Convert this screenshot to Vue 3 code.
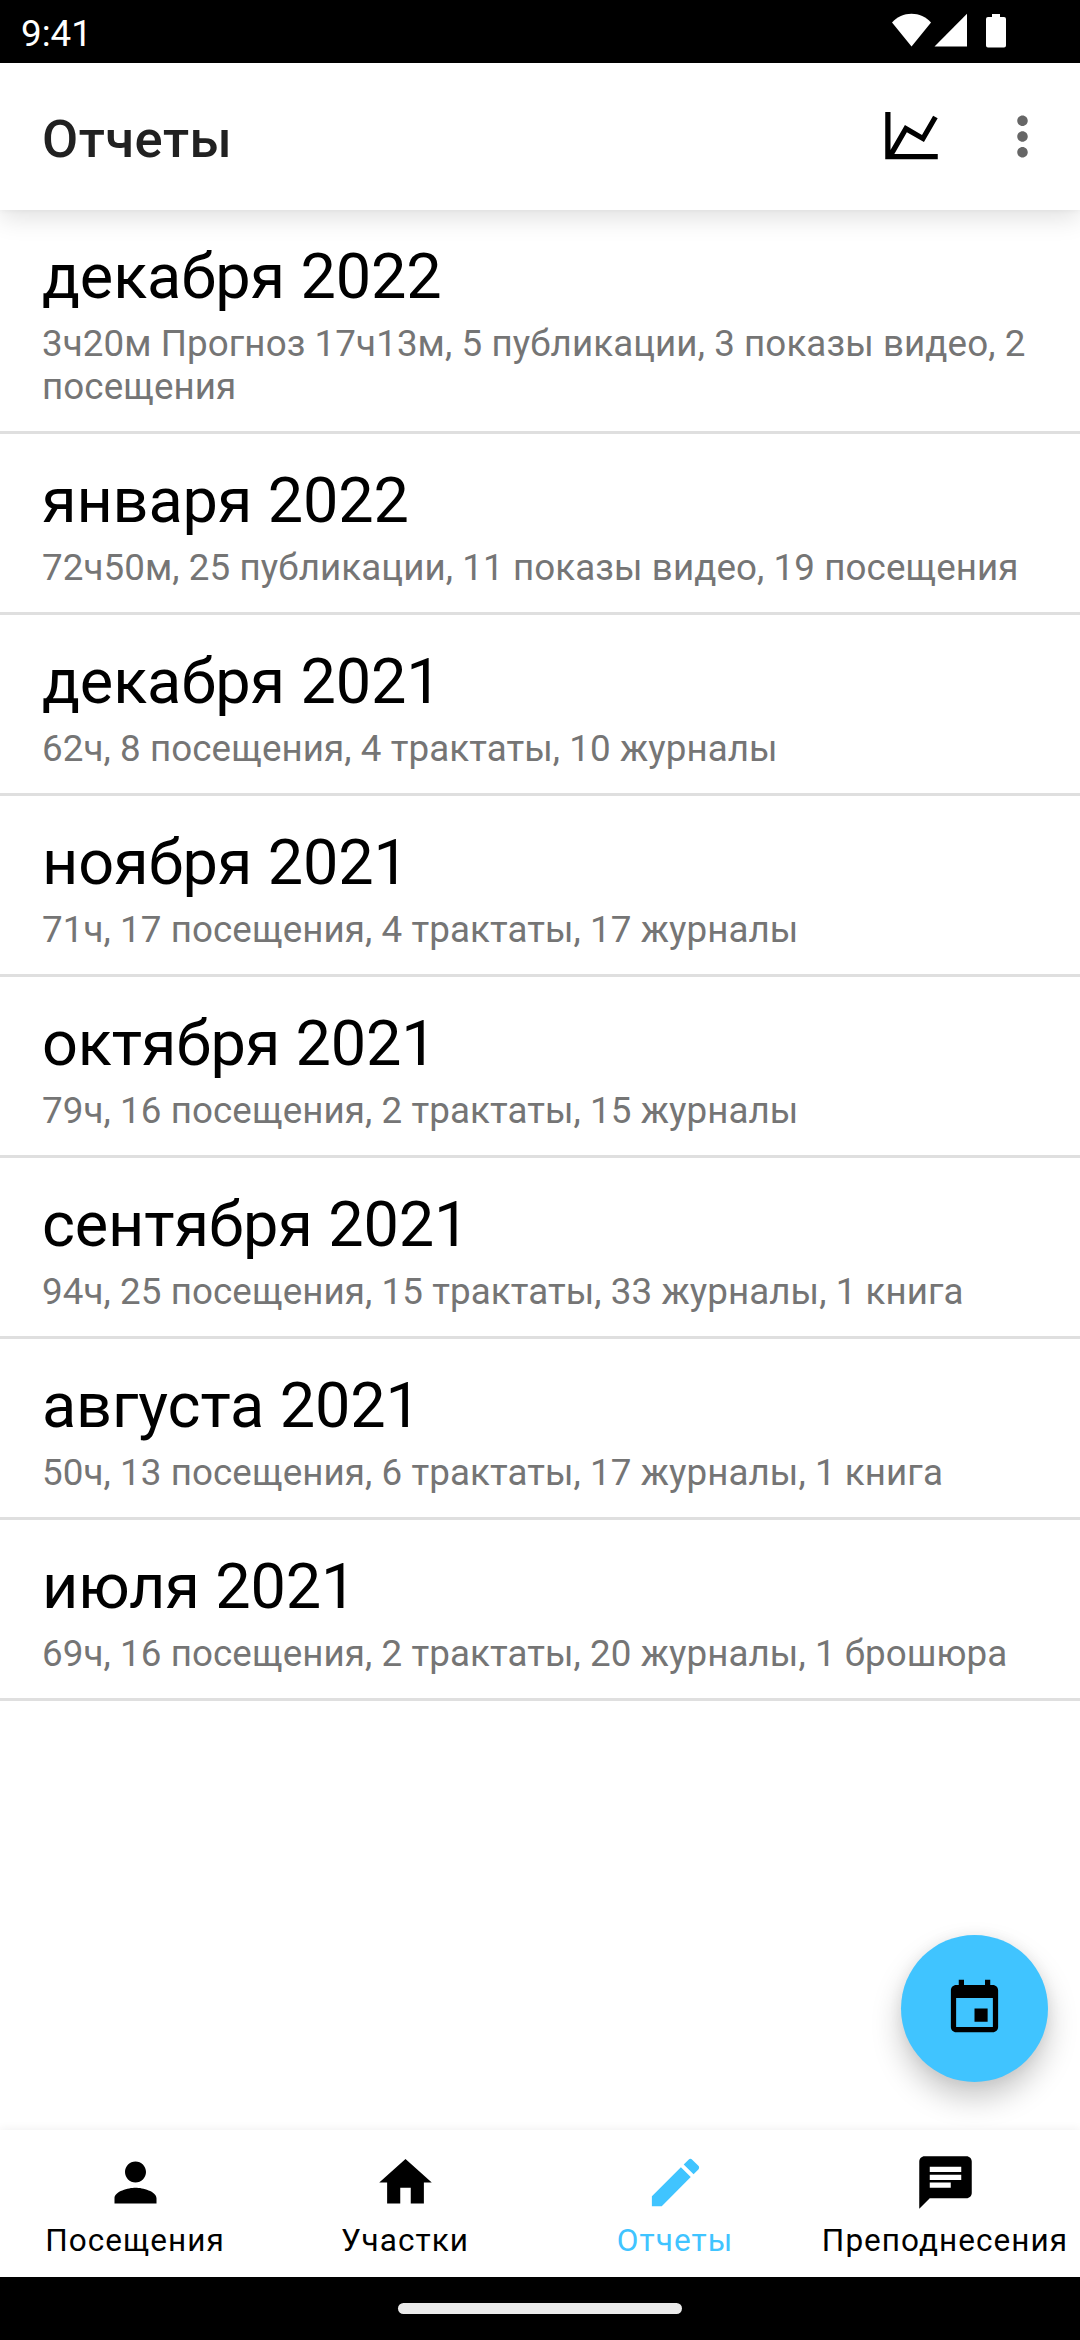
<template>
  <div id="app-reports">
    <div class="status-bar">
      <span class="clock">9:41</span>
      <svg class="status-icons" width="116" height="36" viewBox="0 0 116 36" fill="#ffffff">
        <path d="M0 9.500C5 4 12 0.800 19.500 0.800S34 4 39 9.500L19.500 33.500z" />
        <path d="M42.500 33.500L75 0.800V33.500z" />
        <path d="M96 4h4V1h8v3h4q2 0 2 2v26.500q0 2-2 2H96q-2 0-2-2V6q0-2 2-2z" />
      </svg>
    </div>

    <header class="toolbar">
      <h1>Отчеты</h1>
      <button class="icon-button button-chart">
        <svg viewBox="0 0 24 24"><path :d="icons.chart" /></svg>
      </button>
      <button class="icon-button button-more">
        <svg viewBox="0 0 24 24"><path :d="icons.more" /></svg>
      </button>
    </header>

    <main class="reports">
      <div v-for="report in reports" :key="report.month" class="report">
        <div class="month">{{ report.month }}</div>
        <div class="summary">{{ report.summary }}</div>
      </div>
      <button class="fab">
        <svg viewBox="0 0 24 24"><path :d="icons.event" /></svg>
      </button>
    </main>

    <nav class="bottom-nav">
      <a
        v-for="tab in tabs"
        :key="tab.label"
        class="tab"
        :class="{ active: tab.label === current }"
        @click="current = tab.label"
      >
        <svg viewBox="0 0 24 24"><path :d="tab.icon" /></svg>
        <span>{{ tab.label }}</span>
      </a>
    </nav>

    <div class="system-bar"><div class="handle"></div></div>
  </div>
</template>

<script setup>
import { ref } from 'vue'

const icons = {
  chart: 'M16 11.780L20.240 4.450l1.730 1L16.740 14.500l-6.510-3.750L5.460 19H22v2H2V3h2v14.540L9.500 8z',
  more: 'M12 8c1.100 0 2-.9 2-2s-.9-2-2-2-2 .9-2 2 .9 2 2 2zm0 2c-1.100 0-2 .9-2 2s.9 2 2 2 2-.9 2-2-.9-2-2-2zm0 6c-1.100 0-2 .9-2 2s.9 2 2 2 2-.9 2-2-.9-2-2-2z',
  event: 'M17 12h-5v5h5v-5zM16 1v2H8V1H6v2H5c-1.110 0-1.990.9-1.990 2L3 19c0 1.100.89 2 2 2h14c1.100 0 2-.9 2-2V5c0-1.100-.9-2-2-2h-1V1h-2zm3 18H5V8h14v11z',
  person: 'M12 12c2.210 0 4-1.790 4-4s-1.790-4-4-4-4 1.790-4 4 1.790 4 4 4zm0 2c-2.670 0-8 1.340-8 4v2h16v-2c0-2.660-5.330-4-8-4z',
  home: 'M10 20v-6h4v6h5v-8h3L12 3 2 12h3v8z',
  edit: 'M3 17.250V21h3.750L17.810 9.940l-3.750-3.750L3 17.250zM20.710 7.040c.39-.39.39-1.020 0-1.410l-2.340-2.340c-.39-.39-1.020-.39-1.410 0l-1.830 1.830 3.750 3.750 1.830-1.830z',
  chat: 'M20 2H4c-1.100 0-1.990.9-1.990 2L2 22l4-4h14c1.100 0 2-.9 2-2V4c0-1.100-.9-2-2-2zM6 9h12v2H6V9zm8 5H6v-2h8v2zm4-6H6V6h12v2z'
}

const reports = [
  { month: 'декабря 2022', summary: '3ч20м Прогноз 17ч13м, 5 публикации, 3 показы видео, 2 посещения' },
  { month: 'января 2022', summary: '72ч50м, 25 публикации, 11 показы видео, 19 посещения' },
  { month: 'декабря 2021', summary: '62ч, 8 посещения, 4 трактаты, 10 журналы' },
  { month: 'ноября 2021', summary: '71ч, 17 посещения, 4 трактаты, 17 журналы' },
  { month: 'октября 2021', summary: '79ч, 16 посещения, 2 трактаты, 15 журналы' },
  { month: 'сентября 2021', summary: '94ч, 25 посещения, 15 трактаты, 33 журналы, 1 книга' },
  { month: 'августа 2021', summary: '50ч, 13 посещения, 6 трактаты, 17 журналы, 1 книга' },
  { month: 'июля 2021', summary: '69ч, 16 посещения, 2 трактаты, 20 журналы, 1 брошюра' }
]

const tabs = [
  { label: 'Посещения', icon: icons.person },
  { label: 'Участки', icon: icons.home },
  { label: 'Отчеты', icon: icons.edit },
  { label: 'Преподнесения', icon: icons.chat }
]

const current = ref('Отчеты')
</script>

<style>
body {
  margin: 0;
  background: #ffffff;
}
</style>

<style scoped>
#app-reports {
  display: flex;
  flex-direction: column;
  width: 1080px;
  height: 2340px;
  overflow: hidden;
  background: #ffffff;
  font-family: Roboto, 'Noto Sans', sans-serif;
}

svg {
  display: block;
  flex: none;
}

button {
  padding: 0;
  border: none;
  background: none;
}

.status-bar {
  display: flex;
  flex: none;
  justify-content: space-between;
  box-sizing: border-box;
  height: 63px;
  padding: 12px 72px 0 21px;
  background: #000000;
}

.status-icons {
  margin-top: 1px;
}

.clock {
  color: #ffffff;
  font-size: 36.75px;
  line-height: 43px;
}

.toolbar {
  position: relative;
  z-index: 1;
  display: flex;
  flex: none;
  align-items: center;
  box-sizing: border-box;
  height: 147px;
  padding: 0 26px 0 42px;
  background: #ffffff;
  box-shadow: 0 8px 24px rgba(0, 0, 0, 0.12), 0 0 6px rgba(0, 0, 0, 0.05);
}

.toolbar h1 {
  flex: 1;
  margin: 0;
  padding-top: 5px;
  color: #212121;
  font-size: 52.5px;
  font-weight: 500;
  line-height: 62px;
  letter-spacing: 0.5px;
}

.icon-button svg {
  width: 63px;
  height: 63px;
}

.button-chart {
  margin: 0 48px 2px 0;
}

.button-more {
  fill: #666666;
}

.reports {
  position: relative;
  flex: 1;
}

.report {
  padding: 30px 42px 23px;
  border-bottom: 3px solid #dfdfdf;
}

.month {
  height: 82px;
  color: #000000;
  font-size: 63px;
  line-height: 74px;
  letter-spacing: -0.15px;
}

.summary {
  color: #757575;
  font-size: 36.75px;
  line-height: 43px;
  letter-spacing: 0.08px;
}

.fab {
  position: absolute;
  right: 32px;
  bottom: 48px;
  display: flex;
  align-items: center;
  justify-content: center;
  width: 147px;
  height: 147px;
  border-radius: 50%;
  background: #40c4ff;
  box-shadow: 0 16px 30px rgba(0, 0, 0, 0.22), 0 0 14px rgba(0, 0, 0, 0.06);
}

.fab svg {
  width: 63px;
  height: 63px;
}

.bottom-nav {
  position: relative;
  display: flex;
  flex: none;
  height: 147px;
  background: #ffffff;
  box-shadow: 0 0 10px rgba(0, 0, 0, 0.07);
}

.tab {
  display: flex;
  flex: 1 1 0;
  flex-direction: column;
  align-items: center;
  min-width: 0;
  padding-top: 21px;
  color: #000000;
  fill: currentColor;
  font-size: 31.5px;
  line-height: 37px;
  letter-spacing: 1.05px;
  white-space: nowrap;
}

.tab.active {
  color: #40c4ff;
}

.tab svg {
  width: 63px;
  height: 63px;
  margin-bottom: 8px;
}

.system-bar {
  display: flex;
  flex: none;
  justify-content: center;
  box-sizing: border-box;
  height: 63px;
  padding-top: 26px;
  background: #000000;
}

.handle {
  width: 284px;
  height: 11px;
  border-radius: 5.5px;
  background: #ebebeb;
}
</style>
